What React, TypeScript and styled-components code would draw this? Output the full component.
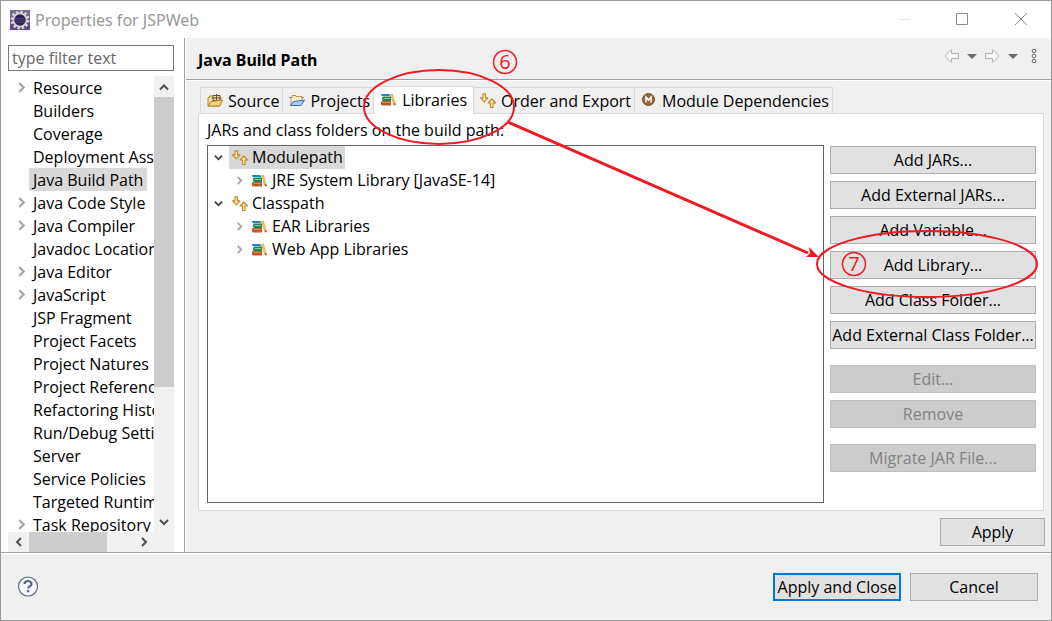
import React from "react";
import styled, { createGlobalStyle, css } from "styled-components";

const Global = createGlobalStyle`
  *, *::before, *::after { box-sizing: border-box; }
  html, body { margin: 0; padding: 0; }
  body, button, input {
    font-family: "Open Sans", "Noto Sans", "Noto Sans CJK SC", sans-serif;
    font-size: 16px;
    line-height: 22px;
    color: #000;
  }
  svg { display: block; flex: none; }
`;

const Window = styled.div`
  position: relative;
  display: flex;
  flex-direction: column;
  height: 100vh;
  min-height: 480px;
  overflow: hidden;
  border: 1px solid #999;
  background: #f0f0f0;
`;

const TitleBar = styled.header`
  display: flex;
  align-items: center;
  flex: none;
  height: 37px;
  padding: 0 22px 0 9px;
  background: #fff;
  color: #999;
`;

const WindowTitle = styled.h1`
  flex: 1;
  margin: 0 0 0 5px;
  font-family: "Noto Sans", sans-serif;
  font-size: 16px;
  font-weight: 400;
`;

const WindowControls = styled.div`
  display: flex;
  gap: 42px;
`;

const IconButton = styled.button`
  display: flex;
  align-items: center;
  justify-content: center;
  padding: 0;
  border: 0;
  background: none;
`;

const Body = styled.div`
  display: flex;
  flex: 1;
  min-height: 0;
`;

const Sidebar = styled.nav`
  display: flex;
  flex-direction: column;
  flex: none;
  width: 184px;
  padding: 7px 10px 0 7px;
  border-right: 1px solid #a0a0a0;
  background: #fff;
`;

const FilterInput = styled.input`
  flex: none;
  width: 100%;
  height: 26px;
  padding: 0 3px;
  border: 1px solid #7a7a7a;
  border-radius: 0;
  background: #fff;
  outline: 0;
  &::placeholder { color: #666; opacity: 1; }
`;

const ListArea = styled.div`
  display: grid;
  grid-template-columns: minmax(0, 1fr) 20px;
  grid-template-rows: minmax(0, 1fr) 20px;
  flex: 1;
  min-height: 0;
  margin-top: 5px;
  background: #f0f0f0;
`;

const PageList = styled.ul`
  margin: 0;
  padding: 0;
  overflow: hidden;
  list-style: none;
  background: #fff;
`;

const PageRow = styled.li`
  display: flex;
  align-items: center;
  height: 23px;
  white-space: nowrap;
`;

const Expander = styled.span<{ $width: number; $inset?: number }>`
  display: flex;
  flex: none;
  align-items: center;
  justify-content: center;
  width: ${(p) => p.$width}px;
  padding-left: ${(p) => p.$inset ?? 0}px;
`;

const PageLink = styled.a<{ $selected?: boolean }>`
  padding: 1px 4px 0;
  color: #000;
  text-decoration: none;
  background: ${(p) => (p.$selected ? "#d9d9d9" : "transparent")};
`;

const VerticalScroll = styled.div`
  display: flex;
  flex-direction: column;
`;

const HorizontalScroll = styled.div`
  display: flex;
`;

const ScrollArrow = styled(IconButton)<{ $vertical?: boolean }>`
  width: ${(p) => (p.$vertical ? 19 : 21)}px;
  height: ${(p) => (p.$vertical ? 21 : 19)}px;
  flex: none;
`;

const ScrollTrack = styled.div<{ $vertical?: boolean }>`
  display: flex;
  flex: 1;
  flex-direction: ${(p) => (p.$vertical ? "column" : "row")};
  min-height: 0;
`;

const ScrollThumb = styled.div<{ $share: number }>`
  flex: 0 0 ${(p) => p.$share}%;
  background: #cdcdcd;
`;

const Content = styled.main`
  display: flex;
  flex: 1;
  flex-direction: column;
  min-width: 0;
  border-left: 1px solid #fff;
`;

const PageHeader = styled.div`
  display: flex;
  flex: none;
  align-items: center;
  height: 43px;
  padding: 0 7px 0 12px;
  border-bottom: 1px solid #fff;
  box-shadow: inset 0 -1px #a0a0a0;
`;

const PageTitle = styled.h2`
  flex: 1;
  margin: 0;
  padding-top: 2px;
  font-family: "Noto Sans", sans-serif;
  font-size: 16px;
  font-weight: 700;
`;

const HeaderTools = styled.div`
  display: flex;
  align-items: center;
  gap: 8px;
  padding-bottom: 6px;
`;

const Tabs = styled.div`
  display: flex;
  flex: none;
  align-items: flex-end;
  margin: 5px 0 0 14px;
`;

const Tab = styled.button<{ $active?: boolean }>`
  display: flex;
  align-items: center;
  gap: 5px;
  height: 26px;
  margin: 0 -1px 0 0;
  padding: 1px 3px 0 6px;
  border: 1px solid #d9d9d9;
  border-bottom: 0;
  background: #f0f0f0;
  white-space: nowrap;
  ${(p) =>
    p.$active &&
    css`
      z-index: 1;
      height: 28px;
      margin-bottom: -1px;
      padding: 0 6px 2px 7px;
      background: #fff;
    `}
`;

const TabPanel = styled.section`
  display: flex;
  flex: 1;
  flex-direction: column;
  min-height: 0;
  margin: 0 7px 0 12px;
  padding: 5px 7px 7px 8px;
  border: 1px solid #d9d9d9;
  background: #fff;
`;

const Columns = styled.div`
  display: flex;
  flex: 1;
  gap: 6px;
  min-height: 0;
  margin-top: 4px;
`;

const PathTree = styled.ul`
  flex: 1;
  min-width: 0;
  margin: 0;
  padding: 0;
  overflow: hidden;
  border: 1px solid #646464;
  list-style: none;
`;

const PathRow = styled.li<{ $child?: boolean }>`
  display: flex;
  height: 23px;
  padding-left: ${(p) => (p.$child ? 21 : 0)}px;
  white-space: nowrap;
`;

const PathLabel = styled.span<{ $selected?: boolean }>`
  display: flex;
  align-items: center;
  gap: 4px;
  padding: 0 2px 0 3px;
  line-height: 23px;
  background: ${(p) => (p.$selected ? "#d9d9d9" : "transparent")};
`;

const ButtonColumn = styled.div`
  display: flex;
  flex: none;
  flex-direction: column;
  gap: 7px;
  width: 206px;
  padding-top: 1px;
`;

const ButtonGroup = styled.div`
  display: flex;
  flex-direction: column;
  gap: 7px;
  margin-bottom: 9px;
`;

const Button = styled.button<{ $width?: number; $primary?: boolean }>`
  flex: none;
  width: ${(p) => (p.$width ? `${p.$width}px` : "100%")};
  height: 28px;
  padding: 0;
  border: ${(p) => (p.$primary ? "2px solid #0078d7" : "1px solid #adadad")};
  border-radius: 0;
  background: #e1e1e1;
  white-space: nowrap;
  &:disabled {
    border-color: #bfbfbf;
    background: #ccc;
    color: #838383;
  }
`;

const ApplyRow = styled.div`
  display: flex;
  flex: none;
  justify-content: flex-end;
  padding: 7px 6px 6px;
`;

const Footer = styled.footer`
  display: flex;
  flex: none;
  align-items: center;
  gap: 9px;
  height: 68px;
  padding: 0 13px 0 16px;
  border-top: 1px solid #a0a0a0;
  box-shadow: inset 0 1px #fff;
`;

const Spacer = styled.div`
  flex: 1;
`;

const Markup = styled.svg`
  position: absolute;
  top: -1px;
  left: -1px;
  z-index: 2;
  pointer-events: none;
`;

const Chevron = ({ dir, color = "#505050", size = 10, weight = 2 }: {
  dir: "up" | "down" | "left" | "right"; color?: string; size?: number; weight?: number;
}) => {
  const paths = {
    up: "M1 7.5 5 3.5 9 7.5",
    down: "M1 3 5 7 9 3",
    left: "M7 1 3 5 7 9",
    right: "M3 1 7 5 3 9",
  };
  return (
    <svg width={size} height={size} viewBox="0 0 10 10" fill="none" stroke={color} strokeWidth={weight} aria-hidden>
      <path d={paths[dir]} />
    </svg>
  );
};

const AppIcon = () => (
  <svg width="20" height="20" viewBox="0 0 20 20" aria-hidden>
    <rect width="20" height="20" fill="#5c4a8a" />
    <rect width="20" height="7" fill="#76689c" />
    <circle cx="10" cy="10" r="8.200" fill="none" stroke="#ddd8d0" strokeWidth="2.600" strokeDasharray="2.500 1.794" />
    <circle cx="10" cy="10" r="6.600" fill="#2c2255" stroke="#d8d4cc" strokeWidth="1.800" />
    <path d="M4.500 8.500h11M4 10.500h12M5 12.500h10" stroke="#51487a" strokeWidth=".8" />
  </svg>
);

const SourceIcon = () => (
  <svg width="16" height="16" viewBox="0 0 16 16" aria-hidden>
    <path d="M1 13V4.500h1.500V3h4v1.500H13V13z" fill="#fbe3a7" stroke="#b88732" />
    <path d="M6 2.500h7v5H6zM9.500 1v7M4.500 5h10" fill="#f0d8b0" stroke="#704830" />
    <path d="M4 8.500 15.500 7l-2.500 6H1z" fill="#fbd27c" stroke="#bb812a" />
  </svg>
);

const ProjectIcon = () => (
  <svg width="16" height="16" viewBox="0 0 16 16" aria-hidden>
    <path d="M2 12.500V4.500h1v-2h4v1h6V8" fill="#fff0c5" stroke="#c29445" />
    <path d="M0 4.500h2.500M12.500 4.500H15" stroke="#8e8d91" />
    <path d="M4.500 8.500 15.500 7 12 12.500H1.500z" fill="#a9cdf8" stroke="#3f68ba" />
  </svg>
);

const LibraryIcon = () => (
  <svg width="16" height="16" viewBox="0 0 16 16" aria-hidden>
    <path d="M0 2h8l1 1v1H1L0 3z" fill="#1987c7" />
    <path d="M2 4.500h8V9H2L1 8V5.500z" fill="#22855e" />
    <path d="M2.500 6.500H9" stroke="#83c89d" />
    <path d="M1 9h9v4.500H1l-1-1V10z" fill="#b65b2c" />
    <path d="M1.500 10.500h8" stroke="#e08b50" />
    <path d="M9 2.500 11.500 1.500l3 9.500-2 1.500z" fill="#edaa35" />
    <path d="m10.500 3 3 8.500" stroke="#f9cf72" />
    <path d="m12.500 11.500 2-.5.500 2-2 .5z" fill="#bb6535" />
  </svg>
);

const PathIcon = () => (
  <svg width="16" height="16" viewBox="0 0 16 16" fill="#fff0b8" stroke="#c08a25" strokeWidth="1.200" strokeLinejoin="round" aria-hidden>
    <path d="M3 .8h2.500v4H8L4.300 8.800.6 4.800H3z" />
    <path d="M10.500 14.500H13V10h2.500l-3.700-4-3.700 4h2.400z" />
  </svg>
);

const ModuleIcon = () => (
  <svg width="16" height="16" viewBox="0 0 16 16" aria-hidden>
    <circle cx="7.500" cy="6.500" r="6" fill="#936538" stroke="#765029" />
    <path d="M5 9.500V4l2.500 3L10 4v5.500" fill="none" stroke="#fff" strokeWidth="1.500" />
  </svg>
);

const HistoryArrow = ({ forward }: { forward?: boolean }) => (
  <svg width="15" height="14" viewBox="0 0 15 14" fill="#f7f7f7" stroke="#b0b0b0" strokeLinejoin="round" aria-hidden>
    <path d={forward ? "M.5 4.500h7V1h1L14 7l-5.500 6h-1V9.500h-7z" : "M14.500 4.500h-7V1h-1L1 7l5.500 6h1V9.500h7z"} />
  </svg>
);

const Caret = () => (
  <svg width="10" height="5" viewBox="0 0 10 5" aria-hidden>
    <path d="M0 0h10L5 5z" fill="#6d6d6d" />
  </svg>
);

const pages: { name: string; expandable?: boolean }[] = [
  { name: "Resource", expandable: true },
  { name: "Builders" },
  { name: "Coverage" },
  { name: "Deployment Assembly" },
  { name: "Java Build Path" },
  { name: "Java Code Style", expandable: true },
  { name: "Java Compiler", expandable: true },
  { name: "Javadoc Location" },
  { name: "Java Editor", expandable: true },
  { name: "JavaScript", expandable: true },
  { name: "JSP Fragment" },
  { name: "Project Facets" },
  { name: "Project Natures" },
  { name: "Project References" },
  { name: "Refactoring History" },
  { name: "Run/Debug Settings" },
  { name: "Server" },
  { name: "Service Policies" },
  { name: "Targeted Runtimes" },
  { name: "Task Repository", expandable: true },
];

const tabs = [
  { name: "Source", Icon: SourceIcon },
  { name: "Projects", Icon: ProjectIcon },
  { name: "Libraries", Icon: LibraryIcon },
  { name: "Order and Export", Icon: PathIcon },
  { name: "Module Dependencies", Icon: ModuleIcon },
];

const entries = [
  { name: "Modulepath", child: false },
  { name: "JRE System Library [JavaSE-14]", child: true },
  { name: "Classpath", child: false },
  { name: "EAR Libraries", child: true },
  { name: "Web App Libraries", child: true },
];

const addActions = [
  "Add JARs...",
  "Add External JARs...",
  "Add Variable...",
  "Add Library...",
  "Add Class Folder...",
  "Add External Class Folder...",
];

export default function App() {
  return (
    <>
      <Global />
      <Window>
        <TitleBar>
          <AppIcon />
          <WindowTitle>Properties for JSPWeb</WindowTitle>
          <WindowControls>
            <IconButton aria-label="Minimize">
              <svg width="16" height="16" stroke="#e3e3e3"><path d="M2 7.500h12" /></svg>
            </IconButton>
            <IconButton aria-label="Maximize">
              <svg width="16" height="16" fill="none" stroke="#8c8c8c"><path d="M1.500 1.500h11v11h-11z" /></svg>
            </IconButton>
            <IconButton aria-label="Close">
              <svg width="16" height="16" stroke="#8c8c8c"><path d="m2 1 12 12M14 1 2 13" /></svg>
            </IconButton>
          </WindowControls>
        </TitleBar>

        <Body>
          <Sidebar aria-label="Property pages">
            <FilterInput aria-label="Filter pages" placeholder="type filter text" />
            <ListArea>
              <PageList>
                {pages.map((page) => (
                  <PageRow key={page.name}>
                    <Expander $width={21} $inset={5}>
                      {page.expandable && <Chevron dir="right" color="#a6a6a6" size={11} />}
                    </Expander>
                    <PageLink href="#" $selected={page.name === "Java Build Path"}>{page.name}</PageLink>
                  </PageRow>
                ))}
              </PageList>
              <VerticalScroll>
                <ScrollArrow $vertical aria-label="Scroll up"><Chevron dir="up" /></ScrollArrow>
                <ScrollTrack $vertical><ScrollThumb $share={70} /></ScrollTrack>
                <ScrollArrow $vertical aria-label="Scroll down"><Chevron dir="down" /></ScrollArrow>
              </VerticalScroll>
              <HorizontalScroll>
                <ScrollArrow aria-label="Scroll left"><Chevron dir="left" /></ScrollArrow>
                <ScrollTrack><ScrollThumb $share={75} /></ScrollTrack>
                <ScrollArrow aria-label="Scroll right"><Chevron dir="right" /></ScrollArrow>
              </HorizontalScroll>
            </ListArea>
          </Sidebar>

          <Content>
            <PageHeader>
              <PageTitle>Java Build Path</PageTitle>
              <HeaderTools>
                <IconButton aria-label="Back"><HistoryArrow /></IconButton>
                <IconButton aria-label="Back history"><Caret /></IconButton>
                <IconButton aria-label="Forward"><HistoryArrow forward /></IconButton>
                <IconButton aria-label="Forward history"><Caret /></IconButton>
                <IconButton aria-label="View menu">
                  <svg width="18" height="16" fill="#fff" stroke="#666">
                    <circle cx="8" cy="3" r="1.800" />
                    <circle cx="8" cy="8" r="1.800" />
                    <circle cx="8" cy="13" r="1.800" />
                  </svg>
                </IconButton>
              </HeaderTools>
            </PageHeader>

            <Tabs role="tablist">
              {tabs.map(({ name, Icon }) => (
                <Tab key={name} role="tab" aria-selected={name === "Libraries"} $active={name === "Libraries"}>
                  <Icon />
                  {name}
                </Tab>
              ))}
            </Tabs>
            <TabPanel role="tabpanel">
              <span id="path-label">JARs and class folders on the build path:</span>
              <Columns>
                <PathTree aria-labelledby="path-label">
                  {entries.map((entry) => (
                    <PathRow key={entry.name} $child={entry.child}>
                      <Expander $width={entry.child ? 20 : 21}>
                        <Chevron
                          dir={entry.child ? "right" : "down"}
                          color={entry.child ? "#a6a6a6" : "#404040"}
                          size={9}
                        />
                      </Expander>
                      <PathLabel $selected={entry.name === "Modulepath"}>
                        {entry.child ? <LibraryIcon /> : <PathIcon />}
                        {entry.name}
                      </PathLabel>
                    </PathRow>
                  ))}
                </PathTree>
                <ButtonColumn>
                  <ButtonGroup>
                    {addActions.map((label) => <Button key={label}>{label}</Button>)}
                  </ButtonGroup>
                  <ButtonGroup>
                    <Button disabled>Edit...</Button>
                    <Button disabled>Remove</Button>
                  </ButtonGroup>
                  <Button disabled>Migrate JAR File...</Button>
                </ButtonColumn>
              </Columns>
            </TabPanel>
            <ApplyRow>
              <Button $width={105}>Apply</Button>
            </ApplyRow>
          </Content>
        </Body>

        <Footer>
          <IconButton aria-label="Help">
            <svg width="22" height="22" viewBox="0 0 22 22" fill="none">
              <circle cx="11" cy="10.500" r="9.500" fill="#f8f8fa" stroke="#5d6b8d" strokeWidth="1.200" />
              <path d="M7.500 8c.2-4 7-4 7 0 0 2.300-3.300 2-3.300 4.500M11.200 14v2.200" stroke="#566589" strokeWidth="2.200" />
            </svg>
          </IconButton>
          <Spacer />
          <Button $width={128} $primary>Apply and Close</Button>
          <Button $width={128}>Cancel</Button>
        </Footer>

        <Markup width="1052" height="621" fill="none" stroke="#ed1c24" strokeWidth="2" aria-hidden>
          <ellipse cx="439" cy="107" rx="75" ry="37" />
          <circle cx="505" cy="62" r="11.500" strokeWidth="1.500" />
          <text x="505" y="69" fontSize="20" textAnchor="middle" fill="#ed1c24" stroke="none">6</text>
          <path d="M508 122 808 253" strokeWidth="3" />
          <path d="m819 257-13 0 4-4-1-6z" fill="#ed1c24" stroke="none" />
          <ellipse cx="927" cy="264" rx="110" ry="33" />
          <circle cx="854" cy="264" r="11.500" strokeWidth="1.500" />
          <text x="854" y="271" fontSize="20" textAnchor="middle" fill="#ed1c24" stroke="none">7</text>
        </Markup>
      </Window>
    </>
  );
}
